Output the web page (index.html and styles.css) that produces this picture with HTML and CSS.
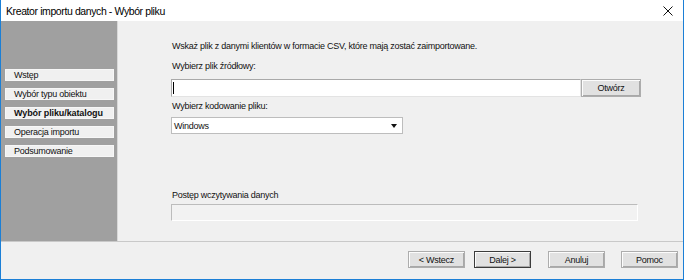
FILE: index.html
```html
<!DOCTYPE html>
<html lang="pl">
<head>
  <meta charset="UTF-8" />
  <title>Kreator importu danych - Wybór pliku</title>
  <link rel="stylesheet" href="styles.css">
</head>
<body>
  <div class="window">
    <div class="titlebar">
      <span class="title">Kreator importu danych - Wybór pliku</span>
      <svg class="close" width="10" height="10" viewBox="0 0 10 10">
        <path d="M0.5 0.5 L9.5 9.5 M9.5 0.5 L0.5 9.5" stroke="#111" stroke-width="1" fill="none"/>
      </svg>
    </div>

    <div class="wizard-body">
      <ul class="steps">
        <li>Wstęp</li>
        <li>Wybór typu obiektu</li>
        <li class="current">Wybór pliku/katalogu</li>
        <li>Operacja importu</li>
        <li>Podsumowanie</li>
      </ul>

      <div class="page">
        <p class="intro">Wskaż plik z danymi klientów w formacie CSV, które mają zostać zaimportowane.</p>

        <div class="label label-file">Wybierz plik źródłowy:</div>
        <div class="file-row">
          <div class="text-input"><span class="caret"></span></div>
          <button class="btn btn-open">Otwórz</button>
        </div>

        <div class="label label-enc">Wybierz kodowanie pliku:</div>
        <div class="combo">
          <span>Windows</span>
          <span class="arrow"></span>
        </div>

        <div class="spacer"></div>

        <div class="label">Postęp wczytywania danych</div>
        <div class="progress"></div>
      </div>
    </div>

    <div class="footer">
      <button class="btn btn-back">&lt; Wstecz</button>
      <button class="btn btn-next">Dalej &gt;</button>
      <button class="btn btn-cancel">Anuluj</button>
      <button class="btn btn-help">Pomoc</button>
    </div>
  </div>
</body>
</html>
```

FILE: styles.css
```css
:root {
  --accent: #1b7fd6;
  --face: #f0f0f0;
  --side: #a0a0a0;
}

* {
  box-sizing: border-box;
  margin: 0;
  padding: 0;
  font-family: 'Liberation Sans', Arial, sans-serif;
}

body {
  background: #fff;
  color: #000;
}

.window {
  width: 684px;
  height: 280px;
  display: flex;
  flex-direction: column;
  border: 1px solid var(--accent);
  border-top: none;
  background: var(--face);
}

.titlebar {
  height: 21px;
  flex: none;
  background: #fff;
  display: flex;
  align-items: center;
  justify-content: space-between;
  padding: 0 10px 0 5px;
}

.title {
  font-size: 10.5px;
  letter-spacing: -0.4px;
  color: #000;
}

.close {
  display: block;
}

.wizard-body {
  height: 220px;
  flex: none;
  display: flex;
}

.steps {
  list-style: none;
  width: 117px;
  flex: none;
  background: var(--side);
  border-right: 1px solid #d8d8d8;
  padding: 48px 0 0 4px;
}

.steps li {
  width: 109px;
  height: 12px;
  margin-bottom: 7px;
  padding-left: 8px;
  background: var(--face);
  border: 1px solid #f7f7f7;
  font-size: 9px;
  letter-spacing: -0.25px;
  line-height: 10px;
  color: #111;
}

.steps li.current {
  font-weight: bold;
  letter-spacing: -0.1px;
}

.page {
  flex: 1;
  display: flex;
  flex-direction: column;
  padding: 20px 0 20px 53px;
}

.intro,
.label {
  font-size: 9px;
  letter-spacing: -0.25px;
  line-height: 11px;
  padding-left: 1px;
  color: #111;
}

.label-file {
  margin-top: 9px;
}

.label-enc {
  margin-top: 4px;
}

.file-row {
  display: flex;
  margin-top: 7px;
  height: 18px;
}

.text-input {
  width: 410px;
  height: 18px;
  background: #fff;
  border: 1px solid;
  border-color: #a9a9a9 #e3e3e3 #e3e3e3 #a9a9a9;
  padding: 2px 0 0 1px;
}

.caret {
  display: block;
  width: 1px;
  height: 12px;
  background: #000;
}

.btn {
  height: 17px;
  width: 57px;
  font-size: 9px;
  letter-spacing: -0.25px;
  color: #111;
  background: #e1e1e1;
  border: 1px solid #adadad;
  box-shadow: inset 1px 1px #fcfcfc, inset -1px -1px #a8a8a8;
}

.btn-open {
  width: 60px;
  height: 18px;
}

.combo {
  margin-top: 5px;
  width: 232px;
  height: 17px;
  background: #fff;
  border: 1px solid #bdbdbd;
  display: flex;
  align-items: center;
  justify-content: space-between;
  padding: 0 5px 0 2px;
  font-size: 9px;
  letter-spacing: -0.25px;
  color: #111;
}

.arrow {
  width: 0;
  height: 0;
  border-left: 3.5px solid transparent;
  border-right: 3.5px solid transparent;
  border-top: 4px solid #111;
}

.spacer {
  flex: 1;
}

.progress {
  margin-top: 3px;
  width: 467px;
  height: 17px;
  background: #f2f2f2;
  border: 1px solid;
  border-color: #bcbcbc #fff #fff #bcbcbc;
}

.footer {
  flex: 1;
  border-top: 1px solid #c9c9c9;
  display: flex;
  justify-content: flex-end;
  align-items: flex-start;
  padding: 9px 5px 0 0;
}

.btn-next {
  margin-left: 9px;
  border-color: #3c3c3c;
}

.btn-cancel {
  margin-left: 17px;
}

.btn-help {
  margin-left: 16px;
}
```
